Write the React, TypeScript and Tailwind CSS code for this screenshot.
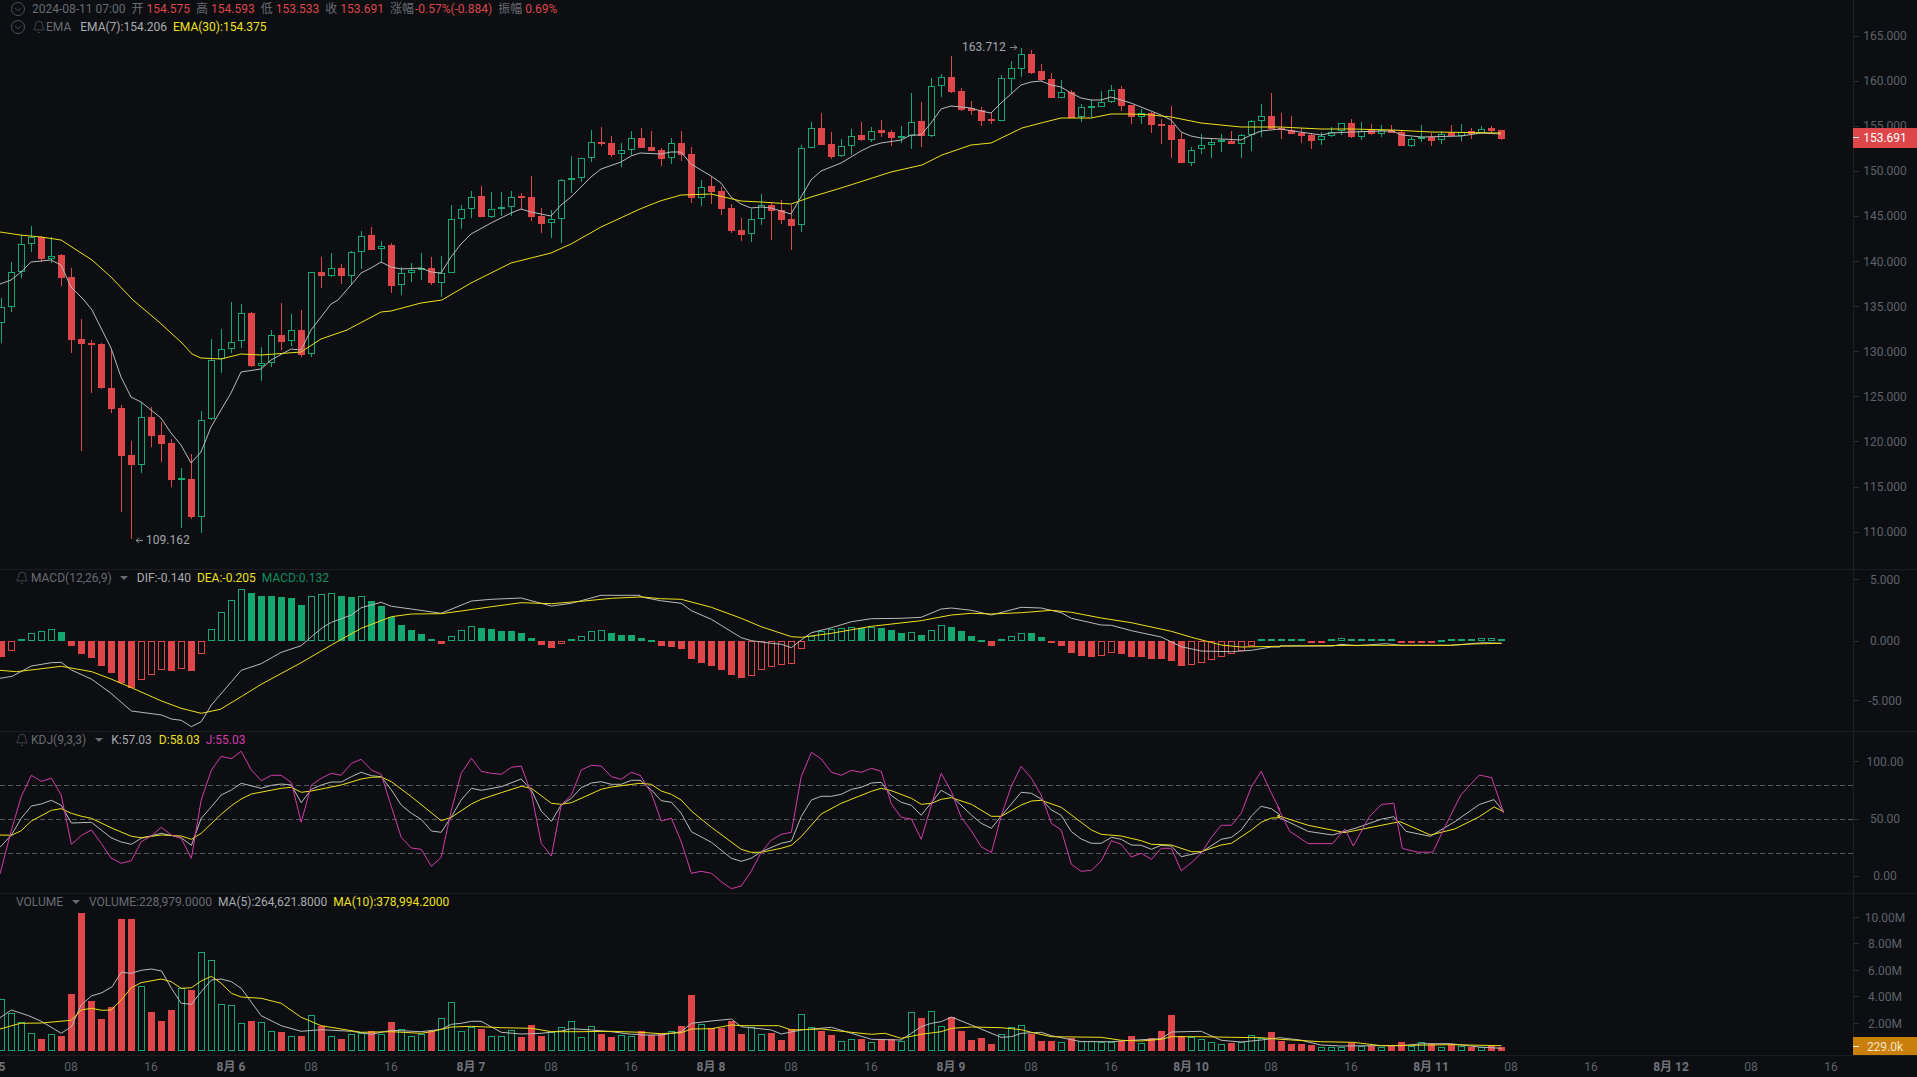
import React from "react";
import { Bell } from "lucide-react";

const BG = "#0c0e11";
const RED = "#de464a";
const GREEN = "#13a86f";
const YEL = "#efe01a";
const WHT = "#bababa";
const PINK = "#d03cab";
const TICK = "#5e626a";

// r = red, g = green : hi top bottom low (pixel rows)
const CANDLES = `g298,307,323,343 g262,272,307,312 g235,244,272,278 g226,237,244,252 r236,237,259,262 g237,256,259,263 r254,255,278,286 r268,277,340,353 r319,339,344,451 r340,343,345,393
r343,344,388,389 r350,388,409,413 r405,408,456,512 r441,455,465,539 g403,417,465,473 r407,417,436,447 r422,435,444,462 r439,443,480,487 g468,478,480,528 r454,479,517,519
g411,420,517,533 g339,360,419,420 g329,349,359,373 g302,342,349,353 g304,313,341,348 r312,313,366,367 g347,363,366,381 g330,335,363,367 r303,335,342,350 g314,330,341,346
r310,330,355,357 g272,272,354,357 r257,272,276,288 g253,268,276,277 r264,268,276,284 g251,252,276,285 g231,236,252,269 r227,235,250,250 g241,246,249,262 r243,245,286,293
g267,273,285,295 g263,270,273,282 g253,268,270,280 r257,268,283,285 g256,273,283,297 g205,219,273,273 g205,209,219,229 g191,197,209,218 r186,196,217,217 g192,209,217,218
g192,207,209,216 g191,197,207,216 r193,196,198,210 r176,197,217,221 r208,216,224,233 g210,219,223,238 g179,180,219,243 g156,178,180,193 g158,158,178,182 g130,142,158,162
r127,142,144,146 r136,143,155,157 g143,150,154,167 g131,138,150,155 r128,138,148,148 r131,147,151,151 r148,150,159,166 g138,143,158,164 r131,143,155,161 r147,154,198,203
g180,187,198,206 r177,186,192,204 r187,191,209,215 r204,208,231,233 r218,230,235,241 g209,219,234,242 g194,205,219,225 r202,205,211,240 r200,210,220,224 r205,219,226,250
g145,148,225,232 g122,128,148,148 r113,128,145,145 r132,144,157,159 g139,146,156,157 g129,136,146,155 r122,135,140,141 g127,131,140,142 r120,130,133,137 r130,132,138,146
g126,136,138,143 g93,122,136,149 r102,121,136,147 g78,86,136,137 g74,77,86,97 r56,77,92,93 r88,91,110,111 r101,108,111,115 r107,110,121,126 r113,119,121,124
g75,78,121,121 g61,68,79,93 g48,54,69,77 r50,54,73,74 r64,71,80,82 r73,79,98,98 g80,92,98,98 r90,92,118,118 g104,107,117,122 g100,106,108,117
g91,102,107,107 g85,90,102,103 r86,89,106,111 r105,105,117,124 g109,113,117,124 r112,113,125,133 r119,124,126,144 r106,125,140,158 r133,139,163,163 g147,150,163,166
g134,145,149,154 g139,142,145,158 g134,140,142,152 r131,141,144,144 g134,135,144,158 g120,121,135,151 g104,116,121,137 r93,116,129,129 r113,128,130,139 r116,130,134,134
r128,133,136,143 r133,135,141,149 g132,136,140,145 g127,132,136,137 g123,123,131,135 r119,123,137,138 g122,131,137,140 r124,130,134,135 g125,130,134,137 r125,130,133,133
r131,132,146,146 g137,139,146,147 g125,137,139,142 r133,137,141,146 g131,134,140,144 r125,133,136,136 g124,132,136,141 r128,131,134,139 g126,129,133,134 r126,128,131,133 r130,130,139,140`
  .trim()
  .split(/\s+/)
  .map((s) => {
    const [a, b, c, d] = s.slice(1).split(",").map(Number);
    return { red: s[0] === "r", hi: a, top: b, bot: c, low: d };
  });

const parseBars = (s: string) =>
  s
    .trim()
    .split(/\s+/)
    .map((t) => ({ v: parseFloat(t), k: t[t.length - 1] }));

const MACD = parseBars(`275R 257r 222G 203g 199g 193g 201G 243R 267R 279R 303R 324R 355R 370R 344r 329r 315r 318R 312r 318R
266r 193g 142g 106g 73g 84G 93G 92G 96G 99G 120G 94g 88g 85g 93G 96G 94g 108G 123G 157G 180G 195G 207G 223G 237R 214g 196g 184g 189G 192G 198G 198G 204G 219G 240R 249R 236r 222G 214g 199g 195g 204G 210G 210G
219G 224G 243R 246R 252R 282R 294R 303R 315R 330R 339R 333r 314r 305r 299r 297r 251r 213g 198g 193g 190g 185g 189G 185g 189G 195G 204G 202g 210G 196g 181g 186G 198G 213G 224G 243R 222G 214g 203g 204G 216G 234R 243R 264R 273R 276R 272r 263r 267R 276R 276R 282R 282R 288R 303R 299r 293r 285r 275r 266r 258r 243r 222G 222G
222G 222G 222G 232R 232R 222G 220g 222G 222G 222G 222G 222G 232R 234R 234R 234R 224G 222G 222G 222G 220g 220g 222G`);

const VOL = parseBars(`313g 355g 382g 415g 432r 418g 423r 297r 54r 318r 372r 337r 72r 72r 273g 351r 378r 345r 280g 285r 172g 196g 328g 330g 385g 378r 382g 409g 411r 423g 423r 361g 392r 424g 432r 418g 415g 408r 418g 381r 403g 424g 418g 409r 370g 322g 409g 397g 402r 424g 424g 405g 426r 390r 423r 412g 397g 379g 427g 394g 417r 426r 421g 424g
408r 420r 418r 409g 393r 300r 388g 400r 398r 378r 417r 397g 418g 414r 435r 402r 358g 397g 408r 420r 439g 433g 432r 442g 432r 432r 439g 352g 369r 349g 394g 366r 408r 435r 429r 447r 418g 397g 391g 417r 438r 438r 442g 430r 439g 439g 442g 442g 438r 423r 445g 429r 408r 360r 423r 425g 433g 442g 448g 444r 441g 421g 429g 411r
438r 447r 447r 450r 455g 455g 455g 444r 453g 452r 455g 452r 441r 453g 442g 448r 455g 448r 452g 456r 456g 453r 456r`);

const pts = (x0: number, kx: number, y0: number, ky: number, s: string) =>
  s
    .trim()
    .split(/\s+/)
    .map((p) => {
      const [a, b] = p.split(",").map(Number);
      return `${(x0 + a * kx).toFixed(1)},${(y0 + b * ky).toFixed(1)}`;
    })
    .join(" ");
const KX = 1 / 2.45;
const KY = 1 / 3;
const F = 1.2226;

const EMA7 = `0,284 11,280 21,272 31,262 51,260 61,265 71,287 84,300 92,310 111,348 121,377 131,397 141,402 151,410 161,418 171,433 181,445 191,463 201,452 211,427 231,393 241,372 261,369 271,360 291,349 301,350 311,330 321,317 331,304 338,300 351,285 361,273 371,268 381,262 391,267 401,269 421,268 431,272 441,273 451,257 461,244 471,234 491,223 511,213 521,209 531,212 551,216 561,205 571,197 581,187 591,177 601,169 621,162 631,156 640,153 661,154 671,152 681,152 691,164 711,176 721,183 731,197 741,204 751,208 761,207 771,208 791,214 801,197 811,180 821,171 841,163 851,157 861,151 871,146 881,143 901,140 911,135 921,135 931,123 941,109 951,106 971,108 981,111 991,113 1001,103 1021,85 1031,82 1041,81 1051,85 1061,87 1071,93 1081,98 1091,100 1101,100 1111,97 1131,103 1151,111 1161,115 1171,120 1181,132 1191,136 1201,138 1221,139 1241,140 1251,135 1261,131 1280,129 1300,132 1321,135 1331,133 1351,132 1382,131 1392,131 1402,135 1422,137 1461,136 1481,133 1501,134`;
const EMA30 = `0,232 20,235 41,237 61,240 92,260 111,277 133,300 159,322 182,343 192,354 201,358 221,359 241,354 261,355 301,352 321,339 347,330 381,312 391,311 421,303 442,300 471,283 511,263 551,253 571,244 601,227 640,209 660,201 681,195 711,194 741,201 761,202 791,204 811,197 841,188 891,172 922,165 942,155 971,145 991,143 1022,128 1041,123 1061,118 1091,118 1111,114 1131,114 1152,115 1171,117 1201,123 1241,127 1280,127 1321,129 1351,129 1392,130 1431,132 1501,133`;

const DIF = [
  pts(0, KX, 565, KY, `0,340 30,334 77,303 126,293 150,292 175,315 225,343 272,385 322,438 346,442 396,450 420,462 444,466 469,485 493,470 518,420 567,350 591,316 640,296 689,262 738,242 763,215 790,188 812,172 861,150 885,128 934,112 959,124 1008,132 1081,145 1155,108 1204,103 1277,99 1351,123 1400,115 1473,91 1568,91`),
  pts(640, KX, 565, KY, `0,95 50,107 101,115 126,137 175,163 248,218 273,227 322,235 347,238 371,248 395,225 420,203 469,188 518,170 567,161 640,160 689,157 738,132 763,129 812,136 861,150 934,127 983,129 1032,143 1057,160 1130,180 1155,181 1204,197 1277,216 1326,245 1375,258 1449,260 1498,256 1547,246 1568,246`),
  pts(1280, 1 / 2.46, 565, KY, `0,243 130,243 150,238 190,242 260,236 300,241 420,241 500,233 545,235`),
].join(" ");
const DEA = [
  pts(0, KX, 565, KY, `0,316 40,320 90,313 150,304 225,320 272,342 322,368 396,408 444,430 493,445 540,433 591,395 640,358 738,293 812,240 885,190 959,155 1008,147 1081,146 1130,138 1204,125 1277,113 1351,116 1424,109 1498,100 1568,96`),
  pts(640, KX, 565, KY, `0,95 50,101 101,103 175,127 248,160 297,185 371,215 396,217 469,205 567,184 689,167 763,150 812,145 861,147 934,143 1008,136 1057,142 1130,159 1204,173 1302,199 1351,217 1424,240 1473,246 1568,244`),
  pts(1280, 1 / 2.46, 565, KY, `0,243 200,241 300,241 420,241 470,237 545,235`),
].join(" ");

const K = [
  pts(0, KX, 730, KY, `0,352 28,315 52,265 77,228 101,222 126,211 150,226 175,279 224,277 272,323 297,336 322,343 346,325 395,310 444,323 469,346 493,265 518,230 542,195 567,180 591,160 640,175 665,166 689,162 714,165 738,218 763,178 787,165 812,156 836,156 861,140 885,127 910,137 934,140 959,180 983,225 1008,250 1032,268 1057,303 1081,307 1106,260 1130,210 1155,175 1179,181 1228,170 1277,147 1302,180 1326,243 1351,274 1375,225 1400,205 1424,173 1449,159 1473,155 1498,163 1522,163 1547,151 1568,151`),
  pts(640, KX, 730, KY, `0,150 28,180 52,212 77,217 101,250 126,305 175,337 224,385 248,394 272,385 297,365 346,340 371,333 395,260 420,210 444,199 469,199 493,193 518,178 542,172 567,159 591,157 616,197 640,217 665,226 689,256 738,181 763,198 812,255 836,280 861,295 885,258 934,187 959,190 983,207 1008,240 1032,256 1057,305 1081,327 1106,340 1130,340 1155,322 1179,328 1204,345 1228,346 1253,358 1277,346 1302,348 1326,380 1375,367 1424,328 1449,322 1473,300 1498,258 1522,229 1547,236 1568,255`),
  pts(0, F, 0, F, `1045,668 1070,680 1090,683 1110,677 1130,670 1140,668 1150,680 1170,684 1190,672 1210,658 1222,654 1230,664`),
].join(" ");
const D = [
  pts(0, KX, 730, KY, `0,315 28,316 52,302 77,273 126,241 150,236 175,250 200,259 224,265 272,293 322,319 346,323 395,315 444,318 469,328 493,310 540,255 567,227 591,207 616,192 689,175 714,172 738,187 763,183 836,165 885,147 910,142 934,141 959,155 1008,200 1081,272 1106,262 1155,222 1179,208 1228,188 1277,169 1302,175 1351,220 1375,223 1400,218 1473,178 1498,171 1568,160`),
  pts(640, KX, 730, KY, `0,160 28,163 52,183 77,193 101,210 126,243 175,292 248,358 272,367 297,367 346,355 371,346 395,320 444,252 493,220 567,184 591,175 616,182 665,205 689,223 714,220 738,208 763,203 812,223 861,259 885,259 934,225 959,213 983,211 1032,232 1106,300 1130,313 1179,318 1228,332 1253,343 1302,345 1351,365 1375,365 1424,345 1449,340 1498,300 1522,277 1547,264 1568,263`),
  pts(0, F, 0, F, `1045,667 1070,675 1100,681 1130,675 1145,672 1170,683 1190,678 1210,668 1222,660 1230,664`),
].join(" ");
const J = [
  pts(0, KX, 730, KY, `0,432 28,300 52,200 77,136 101,154 126,145 150,195 175,343 200,316 224,300 248,340 272,384 297,400 322,392 346,335 371,318 395,292 420,315 444,325 469,385 493,210 518,120 542,79 567,86 591,64 616,120 640,152 665,136 689,136 714,158 738,277 763,165 787,145 812,130 836,136 861,100 885,88 910,120 934,133 959,230 983,322 1008,354 1032,358 1057,409 1081,382 1106,240 1130,130 1155,85 1179,124 1204,130 1228,133 1253,112 1277,108 1302,190 1326,340 1351,378 1375,225 1400,195 1424,120 1449,106 1473,108 1498,140 1522,148 1547,127 1568,136`),
  pts(640, KX, 730, KY, `0,135 28,190 52,273 77,265 101,335 126,430 150,424 175,430 200,456 224,476 248,468 272,425 297,367 322,330 346,313 371,307 395,140 420,67 444,87 469,127 493,136 518,121 542,127 567,115 591,124 616,222 640,262 665,267 689,328 714,225 738,130 763,185 787,262 812,303 836,350 861,368 885,258 910,168 934,109 959,145 983,195 1008,280 1032,300 1057,403 1081,424 1106,421 1130,393 1155,332 1179,343 1204,381 1228,370 1253,388 1277,355 1302,355 1326,422 1351,398 1375,370 1400,322 1424,286 1449,286 1473,250 1498,170 1522,124 1547,190 1568,240`),
  pts(0, F, 0, F, `1045,660 1055,680 1070,690 1090,690 1100,678 1107,692 1120,668 1130,658 1140,657 1147,694 1160,697 1172,697 1180,680 1195,650 1210,634 1220,636 1230,665`),
].join(" ");

const MA5 = [
  pts(0, KX, 895, KY, `0,368 28,345 70,362 100,378 150,415 175,395 199,330 224,303 250,293 275,275 297,232 322,235 346,226 371,222 396,228 420,280 444,325 469,328 493,290 518,255 542,252 567,260 591,280 640,362 689,392 738,409 787,404 861,409 910,418 959,406 1032,410 1081,403 1106,388 1130,385 1155,379 1179,379 1228,412 1277,417 1326,415 1375,408 1400,401 1449,405 1498,410 1547,418 1568,418`),
  pts(640, KX, 895, KY, `0,420 52,420 101,410 126,385 175,378 224,372 248,395 322,405 346,417 395,405 469,397 518,415 567,433 640,435 689,395 714,385 738,380 763,366 812,390 885,427 910,425 934,415 983,412 1008,422 1081,440 1155,440 1204,436 1277,431 1302,411 1375,409 1424,436 1473,441 1522,435 1568,428`),
  pts(1280, 1 / 2.46, 895, KY, `0,428 50,435 100,450 150,453 230,452 300,452 350,446 420,446 490,456 545,460`),
].join(" ");
const MA10 = [
  pts(0, KX, 895, KY, `0,402 50,385 101,384 175,376 199,345 224,340 250,346 272,345 297,315 322,278 346,263 395,252 420,260 444,280 469,278 493,258 518,244 542,265 567,295 591,306 640,310 689,325 738,367 787,392 836,402 885,412 959,410 1032,415 1057,410 1106,396 1155,394 1228,398 1302,400 1351,410 1424,410 1498,409 1568,412`),
  pts(640, KX, 895, KY, `0,412 52,416 101,413 126,402 175,401 224,390 248,392 340,392 371,405 444,402 518,412 567,418 600,415 640,430 689,418 738,410 763,400 812,396 885,398 934,404 959,412 1008,425 1130,427 1179,436 1228,438 1277,433 1302,425 1375,425 1449,427 1522,428 1568,433`),
  pts(1280, 1 / 2.46, 895, KY, `0,433 100,440 180,442 250,452 320,451 420,449 545,452`),
].join(" ");

function Line({ points, color, width = 1 }: { points: string; color: string; width?: number }) {
  return <polyline points={points} fill="none" stroke={color} strokeWidth={width} strokeLinejoin="round" />;
}

function Bar({ i, y1, y2, kind }: { i: number; y1: number; y2: number; kind: string }) {
  const x = 10 * i - 2;
  const c = kind === "R" || kind === "r" ? RED : GREEN;
  const top = Math.round(Math.min(y1, y2));
  const h = Math.max(Math.round(Math.abs(y2 - y1)), 2);
  if (kind === "R" || kind === "G" || h <= 2)
    return <rect x={x} y={top} width={7} height={h} fill={c} shapeRendering="crispEdges" />;
  return (
    <rect x={x + 0.5} y={top + 0.5} width={6} height={h - 1} fill={BG} stroke={c} strokeWidth={1} shapeRendering="crispEdges" />
  );
}

function Chart({ top, h, children }: { top: number; h: number; children: React.ReactNode }) {
  return (
    <svg className="block h-full w-[1853px] shrink-0" viewBox={`0 ${top} 1853 ${h}`}>
      {children}
    </svg>
  );
}

function Axis({ top, h, ticks, children }: { top: number; h: number; ticks: [number, string][]; children?: React.ReactNode }) {
  return (
    <div className="h-full w-[64px] shrink-0 border-l border-[#1e2024]">
      <svg className="block h-full w-[63px] overflow-visible" viewBox={`1854 ${top} 63 ${h}`}>
        {ticks.map(([y, t]) => (
          <g key={t}>
            <rect x={1854} y={Math.round(y)} width={5} height={1} fill="#2b2d31" />
            <text x={1885} y={y + 0.5} textAnchor="middle" dominantBaseline="central" fontSize={12} fill={TICK}>
              {t}
            </text>
          </g>
        ))}
        {children}
      </svg>
    </div>
  );
}

function Toggle() {
  return (
    <svg width="16" height="16" viewBox="0 0 16 16" fill="none" stroke="#4d5157" strokeWidth="1" className="shrink-0">
      <circle cx="8" cy="8" r="6.5" />
      <path d="M5 6.8 8 9.8 11 6.8" />
    </svg>
  );
}

function Caret() {
  return <span className="h-0 w-0 border-x-[4px] border-t-[4px] border-x-transparent border-t-[#686c73]" />;
}

const priceTicks: [number, string][] = [165, 160, 155, 150, 145, 140, 135, 130, 125, 120, 115, 110].map((p) => [
  35.5 + (165 - p) * 9.02,
  `${p}.000`,
]);

const timeLabels = ["8月 5", "08", "16", "8月 6", "08", "16", "8月 7", "08", "16", "8月 8", "08", "16", "8月 9", "08", "16", "8月 10", "08", "16", "8月 11", "08", "16", "8月 12", "08", "16"];

export default function App() {
  return (
    <div className="relative h-[1077px] w-[1917px] overflow-hidden bg-[#0c0e11] text-[12px] leading-[16px] text-[#686c73] [font-family:Roboto,'Noto_Sans_CJK_SC',sans-serif]">
      {/* main pane */}
      <div className="relative flex h-[570px] border-b border-[#1b1d21]">
        <Chart top={0} h={569}>
          {CANDLES.map((c, i) => {
            const col = c.red ? RED : GREEN;
            const x = 1 + 10 * i;
            return (
              <g key={i} shapeRendering="crispEdges">
                <rect x={x} y={c.hi} width={1} height={Math.max(c.low - c.hi, 1)} fill={col} />
                <Bar i={i} y1={c.top} y2={c.bot} kind={c.red ? "R" : "g"} />
              </g>
            );
          })}
          <Line points={EMA7} color={WHT} />
          <Line points={EMA30} color={YEL} />
          <text x={146} y={540} dominantBaseline="central" fontSize={12} fill="#a3a6ab">
            109.162
          </text>
          <path d="M143 540.5h-7m3-2.5-3 2.5 3 2.5" stroke="#a3a6ab" fill="none" strokeWidth={0.8} />
          <text x={962} y={47} dominantBaseline="central" fontSize={12} fill="#a3a6ab">
            163.712
          </text>
          <path d="M1010 47.5h7m-3-2.5 3 2.5-3 2.5" stroke="#a3a6ab" fill="none" strokeWidth={0.8} />
        </Chart>
        <Axis top={0} h={569} ticks={priceTicks}>
          <rect x={1853} y={128} width={64} height={20} fill={RED} />
          <rect x={1853} y={137} width={6} height={1} fill="#fff" />
          <text x={1885} y={138} textAnchor="middle" dominantBaseline="central" fontSize={12} fill="#fff">
            153.691
          </text>
        </Axis>
        <div className="absolute left-[10px] top-[1px] flex flex-col gap-[2px]">
          <div className="flex items-center gap-[6px]">
            <Toggle />
            <div className="flex gap-[6px]">
              <span>2024-08-11 07:00</span>
              <span>开 <span className="text-[#de464a]">154.575</span></span>
              <span>高 <span className="text-[#de464a]">154.593</span></span>
              <span>低 <span className="text-[#de464a]">153.533</span></span>
              <span>收 <span className="text-[#de464a]">153.691</span></span>
              <span>涨幅 <span className="ml-[-2px] text-[#de464a]">-0.57%(-0.884)</span></span>
              <span>振幅 <span className="text-[#de464a]">0.69%</span></span>
            </div>
          </div>
          <div className="flex items-center gap-[6px]">
            <Toggle />
            <div className="flex items-center">
              <Bell size={14} strokeWidth={1} />
              <span>EMA</span>
              <span className="ml-[9px] text-[#a9acaf]">EMA(7):154.206</span>
              <span className="ml-[6px] text-[#efe01a]">EMA(30):154.375</span>
            </div>
          </div>
        </div>
      </div>

      {/* MACD pane */}
      <div className="relative flex h-[162px] border-b border-[#1b1d21]">
        <Chart top={570} h={161}>
          {MACD.map((b, i) => (
            <Bar key={i} i={i} y1={565 + b.v / 3} y2={641} kind={b.k} />
          ))}
          <Line points={DIF} color={WHT} />
          <Line points={DEA} color={YEL} />
        </Chart>
        <Axis top={570} h={161} ticks={[[579, "5.000"], [640.5, "0.000"], [700, "-5.000"]]} />
        <div className="absolute left-[15px] top-[0px] flex items-center">
          <Bell size={14} strokeWidth={1} />
          <span className="ml-[2px]">MACD(12,26,9)</span>
          <span className="ml-[8px] flex"><Caret /></span>
          <span className="ml-[9px] text-[#a9acaf]">DIF:-0.140</span>
          <span className="ml-[6px] text-[#efe01a]">DEA:-0.205</span>
          <span className="ml-[6px] text-[#0f8f5f]">MACD:0.132</span>
        </div>
      </div>

      {/* KDJ pane */}
      <div className="relative flex h-[162px] border-b border-[#1b1d21]">
        <Chart top={732} h={161}>
          {[785, 819, 853].map((y) => (
            <line key={y} x1={0} x2={1853} y1={y + 0.5} y2={y + 0.5} stroke="#55585d" strokeDasharray="5 3" />
          ))}
          <Line points={K} color={WHT} />
          <Line points={D} color={YEL} />
          <Line points={J} color={PINK} />
        </Chart>
        <Axis top={732} h={161} ticks={[[761, "100.00"], [818.5, "50.00"], [875.5, "0.00"]]} />
        <div className="absolute left-[15px] top-[0px] flex items-center">
          <Bell size={14} strokeWidth={1} />
          <span className="ml-[2px]">KDJ(9,3,3)</span>
          <span className="ml-[9px] flex"><Caret /></span>
          <span className="ml-[8px] text-[#a9acaf]">K:57.03</span>
          <span className="ml-[7px] text-[#efe01a]">D:58.03</span>
          <span className="ml-[6px] text-[#d03cab]">J:55.03</span>
        </div>
      </div>

      {/* Volume pane */}
      <div className="relative flex h-[162px] border-b border-[#1b1d21]">
        <Chart top={894} h={161}>
          {VOL.map((b, i) => (
            <Bar key={i} i={i} y1={895 + b.v / 3} y2={1051} kind={b.k === "r" ? "R" : "g"} />
          ))}
          <Line points={MA5} color={WHT} />
          <Line points={MA10} color={YEL} />
        </Chart>
        <Axis top={894} h={161} ticks={[[917, "10.00M"], [943, "8.00M"], [970, "6.00M"], [996, "4.00M"], [1023, "2.00M"]]}>
          <rect x={1853} y={1037} width={64} height={18} fill="#c97f0a" />
          <rect x={1853} y={1046} width={6} height={1} fill="#fff" />
          <text x={1885} y={1046.5} textAnchor="middle" dominantBaseline="central" fontSize={12} fill="#f3e4c6">
            229.0k
          </text>
        </Axis>
        <div className="absolute left-[16px] top-[0px] flex items-center">
          <span>VOLUME</span>
          <span className="ml-[9px] flex"><Caret /></span>
          <span className="ml-[9px]">VOLUME:228,979.0000</span>
          <span className="ml-[6px] text-[#a9acaf]">MA(5):264,621.8000</span>
          <span className="ml-[6px] text-[#efe01a]">MA(10):378,994.2000</span>
        </div>
      </div>

      {/* time axis */}
      <div className="ml-[-49px] flex h-[21px] items-center">
        {timeLabels.map((t, i) => (
          <span
            key={i}
            className={t.includes("月") ? "w-[80px] shrink-0 text-center font-bold text-[#6f737a]" : "w-[80px] shrink-0 text-center text-[#5e626a]"}
          >
            {t}
          </span>
        ))}
      </div>
    </div>
  );
}
